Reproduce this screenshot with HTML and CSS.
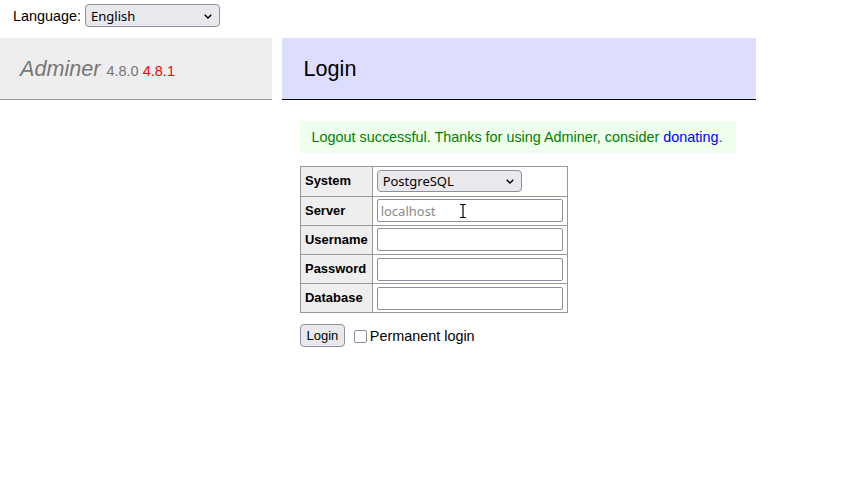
FILE: index.html
```html
<!DOCTYPE html>
<html lang="en">
<head>
    <meta charset="UTF-8">
    <title>Login - Adminer</title>
    <link rel="stylesheet" href="styles.css">
</head>
<body>
    <div class="lang">
        <label>Language: </label>
        <span class="select-wrap lang-select">
            <select class="select">
                <option>English</option>
            </select>
            <svg class="chevron" width="8" height="5" viewBox="0 0 8 5"><path d="M.7.7L4 4 7.3.7" fill="none" stroke="#000" stroke-width="1.3"/></svg>
        </span>
    </div>

    <div class="main">
        <div class="menu">
            <h1><a class="h1-link" href="#">Adminer</a> <span class="version">4.8.0 <a class="new-version" href="#">4.8.1</a></span></h1>
        </div>

        <div class="content">
            <h2>Login</h2>
            <div class="message">Logout successful. Thanks for using Adminer, consider <a href="#">donating</a>.</div>

            <form>
                <table class="login-table">
                    <tr>
                        <th>System</th>
                        <td>
                            <span class="select-wrap driver-select">
                                <select class="select">
                                    <option>PostgreSQL</option>
                                </select>
                                <svg class="chevron" width="8" height="5" viewBox="0 0 8 5"><path d="M.7.7L4 4 7.3.7" fill="none" stroke="#000" stroke-width="1.3"/></svg>
                            </span>
                        </td>
                    </tr>
                    <tr>
                        <th>Server</th>
                        <td class="server-cell">
                            <input class="text" type="text" placeholder="localhost">
                            <svg class="ibeam" width="8" height="16" viewBox="0 0 8 16"><path d="M1 1.5h2.2c.5 0 .8.3.8.8M7 1.5H4.8c-.5 0-.8.3-.8.8V13.7c0 .5-.3.8-.8.8H1M4 13.7c0 .5.3.8.8.8H7" fill="none" stroke="#000" stroke-width="1.2"/></svg>
                        </td>
                    </tr>
                    <tr>
                        <th>Username</th>
                        <td><input class="text" type="text"></td>
                    </tr>
                    <tr>
                        <th>Password</th>
                        <td><input class="text" type="password"></td>
                    </tr>
                    <tr>
                        <th>Database</th>
                        <td><input class="text" type="text"></td>
                    </tr>
                </table>

                <p class="actions">
                    <button class="button" type="button">Login</button>
                    <label class="permanent"><input class="checkbox" type="checkbox">Permanent login</label>
                </p>
            </form>
        </div>
    </div>
</body>
</html>
```

FILE: styles.css
```css
body {
    color: #000;
    background: #fff;
    font: 14.4px/1.25 "Liberation Sans", Arial, sans-serif;
    margin: 0;
}
a {
    color: blue;
    text-decoration: none;
}
.lang {
    display: flex;
    align-items: center;
    gap: 4px;
    height: 38px;
    padding: 0 13px;
    box-sizing: border-box;
    padding-bottom: 7px;
}
.select-wrap {
    position: relative;
    display: inline-block;
}
.select {
    appearance: none;
    box-sizing: border-box;
    height: 23px;
    margin: 0;
    padding: 0 20px 0 5px;
    background: #e9e9ed;
    border: 1px solid #8f8f9d;
    border-radius: 4px;
    font: 13px "Noto Sans", sans-serif;
    color: #000;
    display: block;
}
.lang-select .select {
    width: 135px;
}
.driver-select .select {
    width: 145px;
    height: 22px;
}
.chevron {
    position: absolute;
    right: 8px;
    top: 50%;
    margin-top: -2px;
    pointer-events: none;
}
.main {
    display: flex;
    align-items: flex-start;
}
.menu {
    width: 272px;
    flex: none;
}
h1 {
    font-size: 21.6px;
    line-height: 27px;
    height: 27px;
    margin: 0;
    padding: 17px 20px;
    border-bottom: 1px solid #999;
    font-weight: normal;
    color: #777;
    background: #eee;
}
.h1-link {
    color: #777;
    font-style: italic;
}
.version {
    color: #777;
    font-size: 14.5px;
    line-height: 1;
}
.new-version {
    color: red;
}
.content {
    margin-left: 28px;
    width: 456px;
}
h2 {
    font-size: 21.6px;
    line-height: 27px;
    height: 27px;
    margin: 0 0 21px -18px;
    padding: 17px 21.6px;
    border-bottom: 1px solid #000;
    color: #000;
    font-weight: normal;
    background: #ddf;
}
.message {
    color: green;
    background: #efe;
    padding: 7.2px 11.5px;
    margin: 0 20px 0 0;
    line-height: 18px;
}
form {
    margin: 0;
}
.login-table {
    margin: 13px 0 0 0;
    border-collapse: collapse;
    font-size: 12.96px;
}
.login-table th,
.login-table td {
    border: 1px solid #999;
    padding: 2.6px 4px;
    height: 23px;
}
.login-table th {
    background: #eee;
    text-align: left;
}
.server-cell {
    position: relative;
}
.text {
    box-sizing: border-box;
    width: 186px;
    height: 23px;
    margin: 0;
    padding: 0 3px;
    border: 1px solid #8f8f9d;
    border-radius: 2px;
    font: 13px "Noto Sans", sans-serif;
    display: block;
}
.text::placeholder {
    color: #8a8a8a;
}
.ibeam {
    position: absolute;
    left: 86px;
    top: 6px;
}
.actions {
    display: flex;
    align-items: center;
    margin: 11px 0 0 0;
}
.button {
    box-sizing: border-box;
    height: 23px;
    padding: 0 5.5px;
    background: #e9e9ed;
    border: 1px solid #8f8f9d;
    border-radius: 4px;
    font: 13px "Liberation Sans", Arial, sans-serif;
    color: #000;
}
.permanent {
    display: flex;
    align-items: center;
    margin-left: 9px;
    font-size: 14.4px;
}
.checkbox {
    appearance: none;
    width: 13px;
    height: 13px;
    margin: 1px 3px 0 0;
    border: 1px solid #8f8f9d;
    border-radius: 2px;
    background: #fff;
}
```
